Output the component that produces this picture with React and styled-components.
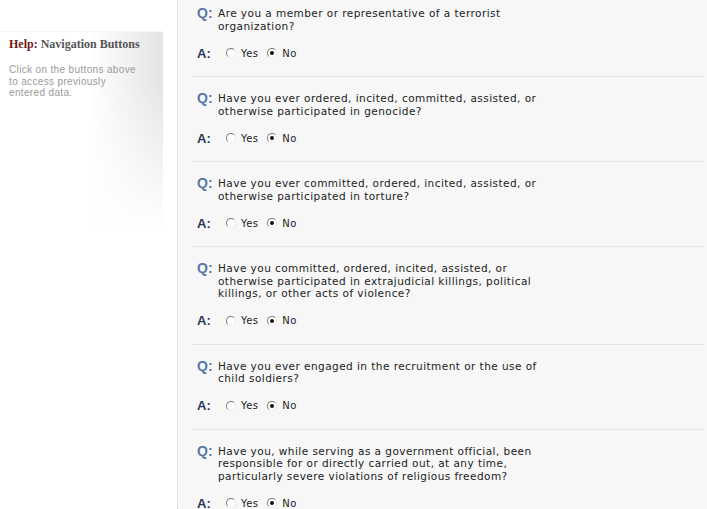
import React from "react";
import styled, { createGlobalStyle } from "styled-components";

const questions = [
  "Are you a member or representative of a terrorist organization?",
  "Have you ever ordered, incited, committed, assisted, or otherwise participated in genocide?",
  "Have you ever committed, ordered, incited, assisted, or otherwise participated in torture?",
  "Have you committed, ordered, incited, assisted, or otherwise participated in extrajudicial killings, political killings, or other acts of violence?",
  "Have you ever engaged in the recruitment or the use of child soldiers?",
  "Have you, while serving as a government official, been responsible for or directly carried out, at any time, particularly severe violations of religious freedom?",
];

const GlobalStyle = createGlobalStyle`
  html, body {
    margin: 0;
    padding: 0;
    background: #fff;
  }
`;

const App = () => {
  return (
    <Page>
      <GlobalStyle />
      <Sidebar>
        <HelpBox>
          <HelpTitle>
            <span>Help:</span> Navigation Buttons
          </HelpTitle>
          <HelpText>
            Click on the buttons above
            <br />
            to access previously
            <br />
            entered data.
          </HelpText>
        </HelpBox>
      </Sidebar>
      <Main>
        <List>
          {questions.map((q, i) => (
            <Item key={i}>
              <QRow>
                <QLabel>Q:</QLabel>
                <QText>{q}</QText>
              </QRow>
              <ARow>
                <ALabel>A:</ALabel>
                <Choice>
                  <Radio />
                  Yes
                </Choice>
                <Choice>
                  <Radio $checked />
                  No
                </Choice>
              </ARow>
            </Item>
          ))}
        </List>
      </Main>
    </Page>
  );
};

export default App;

const Page = styled.div`
  display: flex;
  width: 707px;
  height: 509px;
  overflow: hidden;
`;

const Sidebar = styled.div`
  width: 177px;
  flex-shrink: 0;
  padding-top: 31px;
  background: #fff;
`;

const HelpBox = styled.div`
  width: 163px;
  height: 200px;
  box-sizing: border-box;
  padding: 5px 9px;
  border-top: 1px solid #f4f4f4;
  background: linear-gradient(to bottom, rgba(255, 255, 255, 0) 0%, rgba(255, 255, 255, 0) 25%, #fff 100%),
    linear-gradient(to right, #fff 0%, #fff 55%, #e4e4e4 100%);
`;

const HelpTitle = styled.div`
  font-family: "Liberation Serif", serif;
  font-weight: bold;
  font-size: 12px;
  color: #555;

  span {
    color: #6e1a16;
  }
`;

const HelpText = styled.div`
  font-family: "Liberation Sans", Arial, sans-serif;
  font-size: 10px;
  letter-spacing: 0.35px;
  line-height: 11.5px;
  color: #9a9a9a;
  margin-top: 12px;
`;

const Main = styled.div`
  flex: 1;
  background: #f7f7f7;
  border-left: 1px dotted #cfcfcf;
`;

const List = styled.div`
  margin: 0 3px 0 15px;
`;

const Item = styled.div`
  padding: 15px 0 16px 4px;
  border-bottom: 1px dotted #d2d2d2;

  &:first-child {
    padding-top: 7px;
  }
`;

const QRow = styled.div`
  display: flex;
  align-items: flex-start;
`;

const QLabel = styled.div`
  width: 21px;
  flex-shrink: 0;
  font-family: "Liberation Sans", Arial, sans-serif;
  font-weight: bold;
  font-size: 14px;
  line-height: 13px;
  color: #5677a8;
`;

const QText = styled.div`
  width: 330px;
  font-family: "DejaVu Sans", Verdana, sans-serif;
  font-size: 10.5px;
  letter-spacing: 0.45px;
  line-height: 12.5px;
  color: #222;
`;

const ARow = styled.div`
  display: flex;
  align-items: center;
  height: 14px;
  margin-top: 14px;
`;

const ALabel = styled.div`
  width: 29px;
  flex-shrink: 0;
  font-family: "Liberation Sans", Arial, sans-serif;
  font-weight: bold;
  font-size: 13px;
  color: #2b3957;
`;

const Choice = styled.label`
  display: flex;
  align-items: center;
  gap: 5px;
  margin-right: 9px;
  font-family: "DejaVu Sans", Verdana, sans-serif;
  font-size: 10px;
  letter-spacing: 0.4px;
  color: #222;
`;

const Radio = styled.span`
  position: relative;
  width: 10px;
  height: 10px;
  box-sizing: border-box;
  border-radius: 50%;
  border: 1px solid;
  border-color: #7a7a7a #e8e8e8 #e8e8e8 #7a7a7a;
  background: #fff;

  &::after {
    content: "";
    display: ${(p) => (p.$checked ? "block" : "none")};
    position: absolute;
    left: 2px;
    top: 2px;
    width: 4px;
    height: 4px;
    border-radius: 50%;
    background: #111;
  }
`;
